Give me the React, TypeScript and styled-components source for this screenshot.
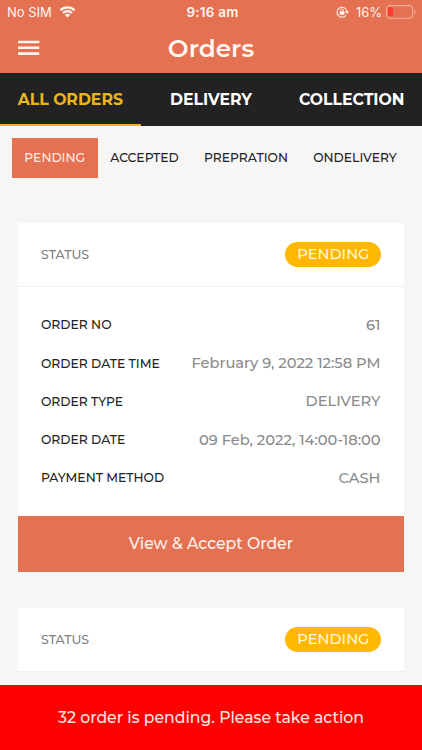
import React from 'react';
import styled, { createGlobalStyle } from 'styled-components';

const coral = '#e47151';
const amber = '#ffb700';

const GlobalStyle = createGlobalStyle`
  * { box-sizing: border-box; }
  body { margin: 0; background: #f6f6f6; }
`;

const Screen = styled.div`
  display: flex;
  flex-direction: column;
  height: 750px;
  width: 422px;
  overflow: hidden;
  background: #f6f6f6;
  font-family: Montserrat, Inter, sans-serif;
  white-space: nowrap;
`;

const Header = styled.header`
  flex: none;
  height: 72.5px;
  background: ${coral};
  color: #fff6f0;
`;

const StatusBar = styled.div`
  display: grid;
  grid-template-columns: 1fr auto 1fr;
  align-items: center;
  height: 24px;
  padding: 0 6px 0 7px;
  font-family: Inter, sans-serif;
  font-size: 13px;
`;

const StatusGroup = styled.div<{ $end?: boolean }>`
  display: flex;
  align-items: center;
  justify-content: ${(p) => (p.$end ? 'flex-end' : 'flex-start')};
  gap: 7px;
`;

const Clock = styled.span`
  padding-left: 2px;
  font-size: 13.5px;
  font-weight: 600;
  letter-spacing: 0.2px;
`;

const BatteryLevel = styled.span`
  display: flex;
  align-items: center;
  gap: 4px;
`;

const TitleBar = styled.div`
  display: grid;
  grid-template-columns: 60px 1fr 60px;
  align-items: center;
  height: 48px;
`;

const MenuButton = styled.button`
  display: flex;
  padding: 0 0 0 18px;
  border: 0;
  background: none;
  color: inherit;
`;

const Title = styled.h1`
  margin: 0;
  text-align: center;
  font-size: 24.7px;
  font-weight: 600;
  line-height: 47px;
`;

const Tabs = styled.nav`
  flex: none;
  display: grid;
  grid-template-columns: repeat(3, 1fr);
  height: 53.5px;
  background: #222;
`;

const Tab = styled.button<{ $active?: boolean }>`
  padding: 2px 0 0;
  border: 0;
  border-bottom: 2px solid ${(p) => (p.$active ? '#edb51c' : 'transparent')};
  background: none;
  color: ${(p) => (p.$active ? '#edb51c' : '#fff')};
  font: 700 15.7px Montserrat, Inter, sans-serif;
`;

const Filters = styled.div`
  flex: none;
  display: flex;
  padding: 11.5px 11.7px 0;
  height: 51.5px;
`;

const Filter = styled.button<{ $active?: boolean }>`
  padding: 0 12.65px;
  border: 0;
  background: ${(p) => (p.$active ? coral : 'transparent')};
  color: ${(p) => (p.$active ? '#ffece2' : '#222')};
  font: 500 12.35px Montserrat, Inter, sans-serif;
`;

const OrderList = styled.main`
  flex: 1;
  min-height: 0;
  overflow: hidden;
  display: flex;
  flex-direction: column;
  gap: 36px;
  padding: 45px 18px 0;
`;

const Card = styled.article`
  flex: none;
  background: #fff;
`;

const CardHead = styled.div`
  display: flex;
  align-items: center;
  justify-content: space-between;
  height: 64px;
  padding: 0 22.6px 0 23px;
  border-bottom: 1px solid #f0f0f0;
`;

const StatusLabel = styled.span`
  color: #808080;
  font-size: 12.5px;
  font-weight: 500;
`;

const Badge = styled.span`
  height: 25px;
  padding: 0 12px;
  border-radius: 13px;
  background: ${amber};
  color: #fff8dc;
  font-size: 14.7px;
  font-weight: 500;
  line-height: 25px;
`;

const Details = styled.dl`
  margin: 0;
  padding: 19.4px 23.5px 19px 23px;
`;

const Detail = styled.div`
  display: flex;
  align-items: center;
  justify-content: space-between;
  height: 38.2px;
`;

const Term = styled.dt`
  color: #222;
  font-size: 12.35px;
  font-weight: 500;
`;

const Value = styled.dd`
  margin: 0;
  color: #8a8a8a;
  font-size: 14.65px;
  font-weight: 500;
`;

const AcceptButton = styled.button`
  display: block;
  width: 100%;
  height: 56px;
  padding: 0;
  border: 0;
  background: ${coral};
  color: #fff3ec;
  font: 500 15.7px Montserrat, Inter, sans-serif;
`;

const Alert = styled.footer`
  flex: none;
  height: 65px;
  background: #fe0000;
  color: #ffe3e0;
  text-align: center;
  font-size: 15.7px;
  font-weight: 500;
  line-height: 65px;
`;

const WifiIcon = () => (
  <svg width="17" height="12" viewBox="0 0 16 12" fill="none" stroke="currentColor" strokeWidth="2.1">
    <path d="M.9 4.3a10 10 0 0 1 14.2 0M3.5 7a6.3 6.3 0 0 1 9 0" />
    <path d="M8 11.5 5.5 9a3.5 3.5 0 0 1 5 0z" fill="currentColor" stroke="none" />
  </svg>
);

const RotationLockIcon = () => (
  <svg width="13" height="12" viewBox="0 0 13 12" fill="none" stroke="currentColor">
    <path d="M10.1 9.2A5 5 0 1 1 11 5.5" strokeWidth="1.1" />
    <path d="M9 5.2h4L11 8z" fill="currentColor" stroke="none" />
    <rect x="3.7" y="5.2" width="4.8" height="3.5" rx=".5" fill="currentColor" stroke="none" />
    <path d="M4.8 5.5V4.3a1.3 1.3 0 0 1 2.6 0v1.2" strokeWidth=".9" />
  </svg>
);

const BatteryIcon = () => (
  <svg width="30" height="14" viewBox="0 0 30 14">
    <rect x=".6" y=".6" width="26" height="12.6" rx="3.2" fill="none" stroke="#f6b09b" strokeWidth="1.1" />
    <rect x="2" y="2.3" width="5" height="9" rx="1" fill="#fb3c30" />
    <path d="M28.2 4.8c1.6.5 1.6 3.7 0 4.2z" fill="#f6b09b" />
  </svg>
);

const MenuIcon = () => (
  <svg width="22" height="16" viewBox="0 0 22 16" stroke="currentColor" strokeWidth="2.6">
    <path d="M0 2h21.3M0 7.8h21.3M0 13.6h21.3" />
  </svg>
);

const tabs = ['ALL ORDERS', 'DELIVERY', 'COLLECTION'];
const filters = ['PENDING', 'ACCEPTED', 'PREPRATION', 'ONDELIVERY'];
const details = [
  ['ORDER NO', '61'],
  ['ORDER DATE TIME', 'February 9, 2022 12:58 PM'],
  ['ORDER TYPE', 'DELIVERY'],
  ['ORDER DATE', '09 Feb, 2022, 14:00-18:00'],
  ['PAYMENT METHOD', 'CASH'],
];

const CardStatus = () => (
  <CardHead>
    <StatusLabel>STATUS</StatusLabel>
    <Badge>PENDING</Badge>
  </CardHead>
);

export default function App() {
  return (
    <Screen>
      <GlobalStyle />
      <Header>
        <StatusBar>
          <StatusGroup>
            <span>No SIM</span>
            <WifiIcon />
          </StatusGroup>
          <Clock>9:16 am</Clock>
          <StatusGroup $end>
            <RotationLockIcon />
            <BatteryLevel>
              16%
              <BatteryIcon />
            </BatteryLevel>
          </StatusGroup>
        </StatusBar>
        <TitleBar>
          <MenuButton aria-label="Menu">
            <MenuIcon />
          </MenuButton>
          <Title>Orders</Title>
        </TitleBar>
      </Header>
      <Tabs>
        {tabs.map((label, i) => (
          <Tab key={label} $active={i === 0}>{label}</Tab>
        ))}
      </Tabs>
      <Filters>
        {filters.map((label, i) => (
          <Filter key={label} $active={i === 0}>{label}</Filter>
        ))}
      </Filters>
      <OrderList>
        <Card>
          <CardStatus />
          <Details>
            {details.map(([term, value]) => (
              <Detail key={term}>
                <Term>{term}</Term>
                <Value>{value}</Value>
              </Detail>
            ))}
          </Details>
          <AcceptButton>View &amp; Accept Order</AcceptButton>
        </Card>
        <Card>
          <CardStatus />
        </Card>
      </OrderList>
      <Alert>32 order is pending. Please take action</Alert>
    </Screen>
  );
}
